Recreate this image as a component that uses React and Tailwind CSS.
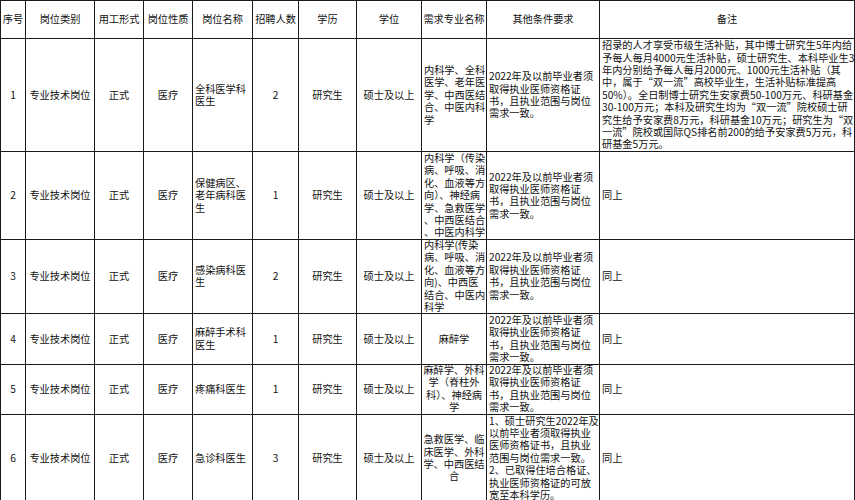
const head = ['序号', '岗位类别', '用工形式', '岗位性质', '岗位名称', '招聘人数', '学历', '学位', '需求专业名称', '其他条件要求', '备注']

const cond = ['2022年及以前毕业者须', '取得执业医师资格证', '书，且执业范围与岗位', '需求一致。']

const rows = [
  {
    h: 'h-[113px]',
    no: '1',
    name: ['全科医学科', '医生'],
    num: '2',
    major: ['内科学、全科', '医学、老年医', '学、中西医结', '合、中医内科', '学'],
    majorCenter: false,
    cond,
    note: [
      '招录的人才享受市级生活补贴，其中博士研究生5年内给',
      '予每人每月4000元生活补贴，硕士研究生、本科毕业生3',
      '年内分别给予每人每月2000元、1000元生活补贴（其',
      '中，属于“双一流”高校毕业生，生活补贴标准提高',
      '50%）。全日制博士研究生安家费50-100万元、科研基金',
      '30-100万元；本科及研究生均为“双一流”院校硕士研',
      '究生给予安家费8万元，科研基金10万元；研究生为“双',
      '一流”院校或国际QS排名前200的给予安家费5万元，科',
      '研基金5万元。',
    ],
  },
  {
    h: 'h-[87px]',
    no: '2',
    name: ['保健病区、', '老年病科医', '生'],
    num: '1',
    major: ['内科学（传染', '病、呼吸、消', '化、血液等方', '向）、神经病', '学、急救医学', '、中西医结合', '、中医内科学'],
    majorCenter: false,
    cond,
    note: ['同上'],
  },
  {
    h: 'h-[75px]',
    no: '3',
    name: ['感染病科医', '生'],
    num: '2',
    major: ['内科学(传染', '病、呼吸、消', '化、血液等方', '向)、中西医', '结合、中医内', '科学'],
    majorCenter: false,
    cond,
    note: ['同上'],
  },
  {
    h: 'h-[50px]',
    no: '4',
    name: ['麻醉手术科', '医生'],
    num: '1',
    major: ['麻醉学'],
    majorCenter: true,
    cond,
    note: ['同上'],
  },
  {
    h: 'h-[50px]',
    no: '5',
    name: ['疼痛科医生'],
    num: '1',
    major: ['麻醉学、外科', '学（脊柱外', '科）、神经病', '学'],
    majorCenter: true,
    cond,
    note: ['同上'],
  },
  {
    h: 'h-[89px]',
    no: '6',
    name: ['急诊科医生'],
    num: '3',
    major: ['急救医学、临', '床医学、外科', '学、中西医结', '合'],
    majorCenter: true,
    cond: ['1、硕士研究生2022年及', '以前毕业者须取得执业', '医师资格证书，且执业', '范围与岗位需求一致。', '2、已取得住培合格证、', '执业医师资格证的可放', '宽至本科学历。'],
    note: ['同上'],
  },
]

function Cell({ lines, align = 'center' }) {
  return (
    <div
      className={
        'flex flex-col justify-center overflow-visible border-r border-b border-[#1a1a1a] ' +
        (align === 'center' ? 'items-center text-center' : 'items-start pl-[2px] text-left')
      }
    >
      {lines.map((l, i) => (
        <div key={i} className="whitespace-nowrap">
          {l}
        </div>
      ))}
    </div>
  )
}

export default function App() {
  return (
    <div className="h-[500px] w-[855px] overflow-hidden bg-white">
      <div className="grid w-[855px] grid-cols-[25px_69px_49px_49px_60px_46px_58px_65px_65px_113px_255px] border-t border-l border-[#1a1a1a] font-['Noto_Sans_CJK_SC',sans-serif] text-[10.2px] leading-[12.4px] text-[#111]">
        {head.map((t) => (
          <div key={t} className="flex h-[38px] items-center justify-center whitespace-nowrap border-r border-b border-[#1a1a1a]">
            {t}
          </div>
        ))}
        {rows.map((r) => (
          <div key={r.no} className={'col-span-11 grid grid-cols-subgrid ' + r.h}>
            <Cell lines={[r.no]} />
            <Cell lines={['专业技术岗位']} />
            <Cell lines={['正式']} />
            <Cell lines={['医疗']} />
            <Cell lines={r.name} align="left" />
            <Cell lines={[r.num]} />
            <Cell lines={['研究生']} />
            <Cell lines={['硕士及以上']} />
            <Cell lines={r.major} align={r.majorCenter ? 'center' : 'left'} />
            <Cell lines={r.cond} align="left" />
            <Cell lines={r.note} align="left" />
          </div>
        ))}
      </div>
    </div>
  )
}
